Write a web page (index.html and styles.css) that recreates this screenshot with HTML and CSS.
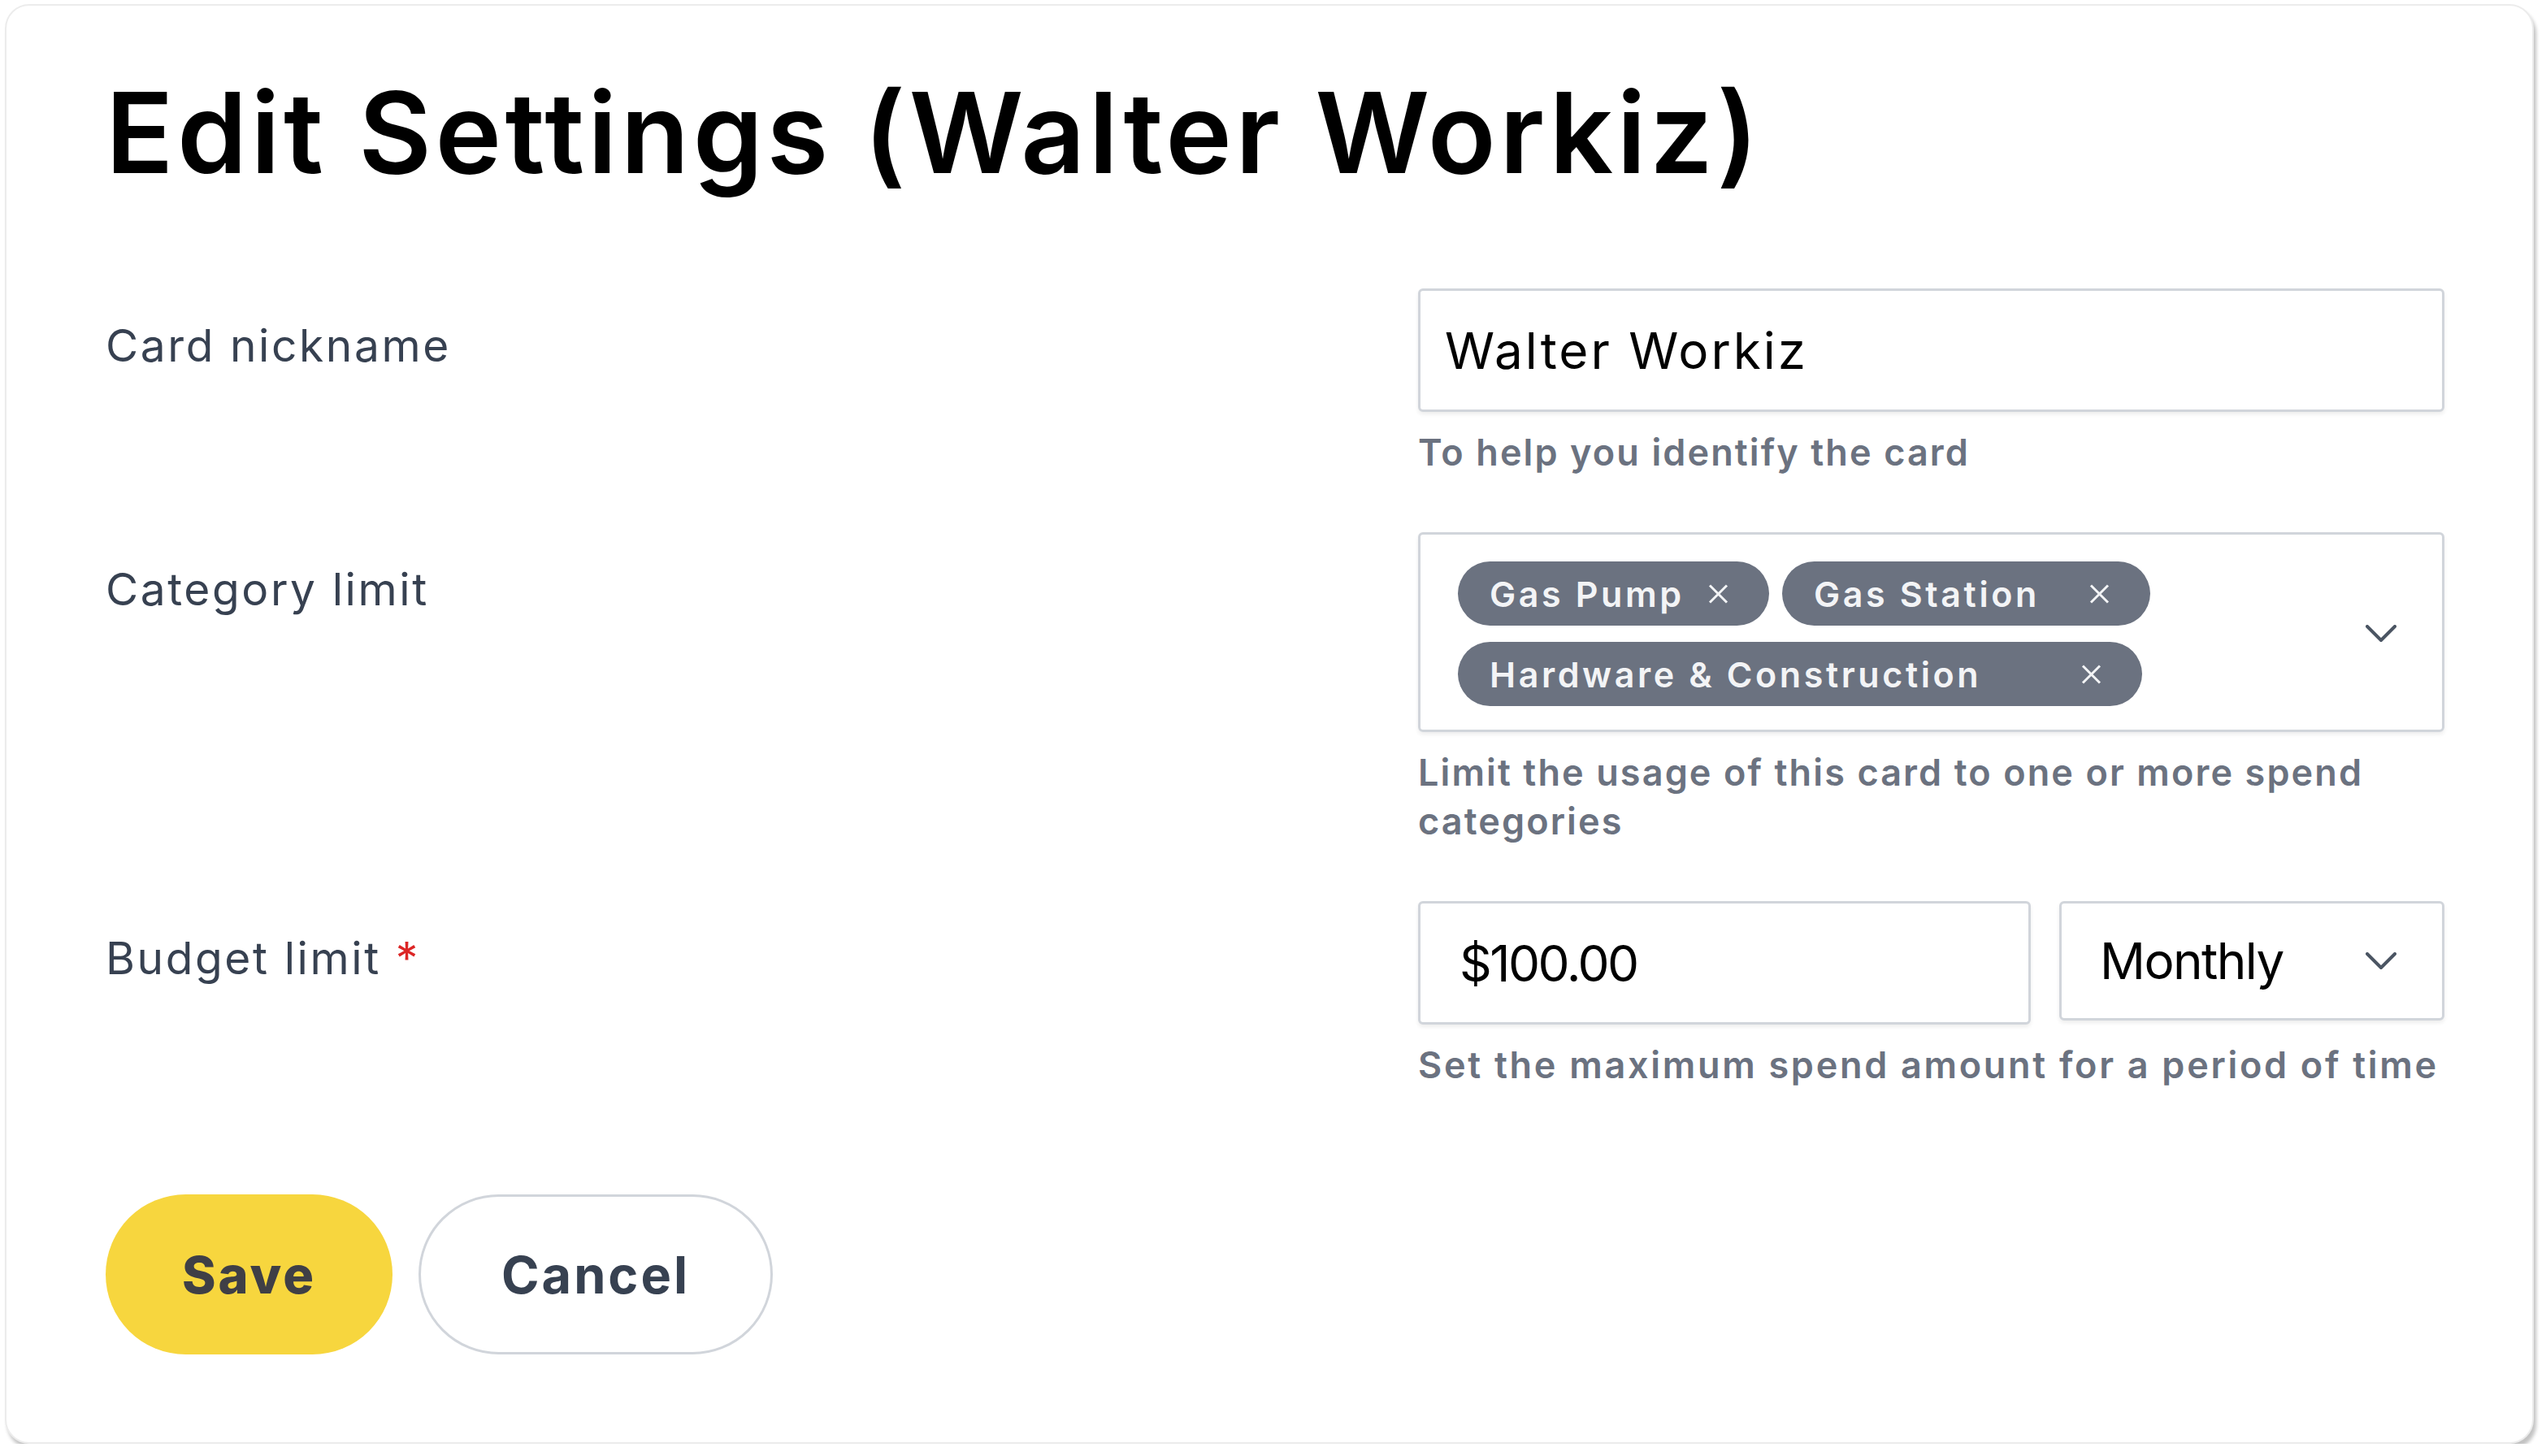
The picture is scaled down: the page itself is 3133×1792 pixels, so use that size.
FILE: index.html
```html
<!DOCTYPE html>
<html lang="en">
<head>
<meta charset="utf-8">
<title>Edit Settings</title>
<link rel="stylesheet" href="styles.css">
</head>
<body>
<div class="card">
  <h1 class="title">Edit Settings (Walter Workiz)</h1>
  <div class="form">
    <div class="row">
      <div class="label">Card nickname</div>
      <div class="field">
        <div class="input input--text"><span class="value value--name">Walter Workiz</span></div>
        <p class="help">To help you identify the card</p>
      </div>
    </div>
    <div class="row">
      <div class="label">Category limit</div>
      <div class="field">
        <div class="multiselect">
          <div class="chips">
            <span class="chip chip--pump"><span class="chip-text">Gas Pump</span><svg class="chip-x" viewBox="0 0 25 24"><path d="M2 1.5 L23 22.5 M23 1.5 L2 22.5"/></svg></span>
            <span class="chip chip--station"><span class="chip-text">Gas Station</span><svg class="chip-x" viewBox="0 0 25 24"><path d="M2 1.5 L23 22.5 M23 1.5 L2 22.5"/></svg></span>
            <span class="chip chip--hardware"><span class="chip-text">Hardware &amp; Construction</span><svg class="chip-x" viewBox="0 0 25 24"><path d="M2 1.5 L23 22.5 M23 1.5 L2 22.5"/></svg></span>
          </div>
          <svg class="chevron" viewBox="0 0 38 22"><path d="M2 2 L19 19 L36 2"/></svg>
        </div>
        <p class="help">Limit the usage of this card to one or more spend categories</p>
      </div>
    </div>
    <div class="row">
      <div class="label">Budget limit <span class="required">*</span></div>
      <div class="field">
        <div class="budget">
          <div class="input input--amount"><span class="value value--amount">$100.00</span></div>
          <div class="input input--select"><span class="value value--period">Monthly</span><svg class="chevron" viewBox="0 0 38 22"><path d="M2 2 L19 19 L36 2"/></svg></div>
        </div>
        <p class="help help--wide">Set the maximum spend amount for a period of time</p>
      </div>
    </div>
  </div>
  <div class="actions">
    <button class="btn btn--save">Save</button>
    <button class="btn btn--cancel">Cancel</button>
  </div>
</div>
</body>
</html>
```
FILE: styles.css
```css
* { box-sizing: border-box; }
html, body { margin: 0; padding: 0; background: #ffffff; }
body { font-family: "Inter", "Liberation Sans", sans-serif; }

.card {
  margin: 5px 0 0 6px;
  width: 3112px;
  height: 1772px;
  background: #ffffff;
  border: 2px solid #ececec;
  border-radius: 30px;
  box-shadow: 3px 6px 4px rgba(0, 0, 0, 0.24);
  padding: 87px 108px 0 122px;
}

.title {
  margin: 0 0 123px 0;
  font-size: 138px;
  line-height: 138px;
  font-weight: 600;
  color: #000000;
  letter-spacing: 4.4px;
}

.form { display: flex; flex-direction: column; gap: 68px; }

.row {
  display: grid;
  grid-template-columns: 1615px 1263px;
}

.label {
  padding-top: 29px;
  font-size: 55px;
  line-height: 82px;
  font-weight: 400;
  color: #374151;
  letter-spacing: 2.6px;
}
.required { color: #dc2626; }

.field { display: flex; flex-direction: column; }

.input {
  height: 152px;
  border: 3px solid #d1d5db;
  border-radius: 6px;
  box-shadow: 0 3px 5px rgba(0, 0, 0, 0.07);
  display: flex;
  align-items: center;
  background: #fff;
}
.value { font-size: 62px; color: #000; font-weight: 400; }
.value--name { letter-spacing: 3px; }
.value--amount { letter-spacing: -2.5px; }
.value--period { letter-spacing: -1.6px; }
.input--text { padding-left: 30px; }

.help {
  margin: 20px 0 0 0;
  font-size: 45px;
  line-height: 60px;
  font-weight: 600;
  color: #6b7280;
  letter-spacing: 2.1px;
}
.help--wide { letter-spacing: 2.7px; }

.multiselect {
  border: 3px solid #d1d5db;
  border-radius: 6px;
  box-shadow: 0 3px 5px rgba(0, 0, 0, 0.07);
  padding: 33px 56px 29px 46px;
  display: flex;
  align-items: center;
}
.chips {
  flex: 1;
  display: flex;
  flex-wrap: wrap;
  gap: 20px 16px;
}
.chip {
  height: 79px;
  border-radius: 40px;
  background: #6b7280;
  color: #f3f4f6;
  display: flex;
  align-items: center;
  padding: 0 50px 0 39px;
  font-size: 43px;
  font-weight: 600;
  letter-spacing: 3.6px;
}
.chip-text { flex: 1; white-space: nowrap; }
.chip--pump { width: 383px; }
.chip--station { width: 453px; }
.chip--hardware { width: 842px; }
.chip-x { width: 25px; height: 24px; flex: none; }
.chip-x path { stroke: #f3f4f6; stroke-width: 3; fill: none; }

.chevron { width: 38px; height: 22px; flex: none; }
.chevron path { stroke: #4b5563; stroke-width: 4; fill: none; stroke-linecap: round; stroke-linejoin: round; }

.budget { display: flex; gap: 35px; align-items: flex-start; }
.input--amount { width: 754px; padding-left: 48px; }
.input--select {
  flex: 1;
  height: 147px;
  padding: 0 56px 0 47px;
  justify-content: space-between;
}

.actions {
  margin-top: 129px;
  display: flex;
  gap: 32px;
}
.btn {
  height: 197px;
  border-radius: 100px;
  font-family: "Inter", "Liberation Sans", sans-serif;
  font-size: 63px;
  font-weight: 800;
  letter-spacing: 3px;
  display: flex;
  align-items: center;
  justify-content: center;
  padding: 0;
  cursor: pointer;
}
.btn--save {
  width: 353px;
  background: #f7d63e;
  border: none;
  color: #3f3f46;
}
.btn--cancel {
  width: 436px;
  background: #ffffff;
  border: 3px solid #d1d5db;
  color: #374151;
  font-weight: 700;
}
```
